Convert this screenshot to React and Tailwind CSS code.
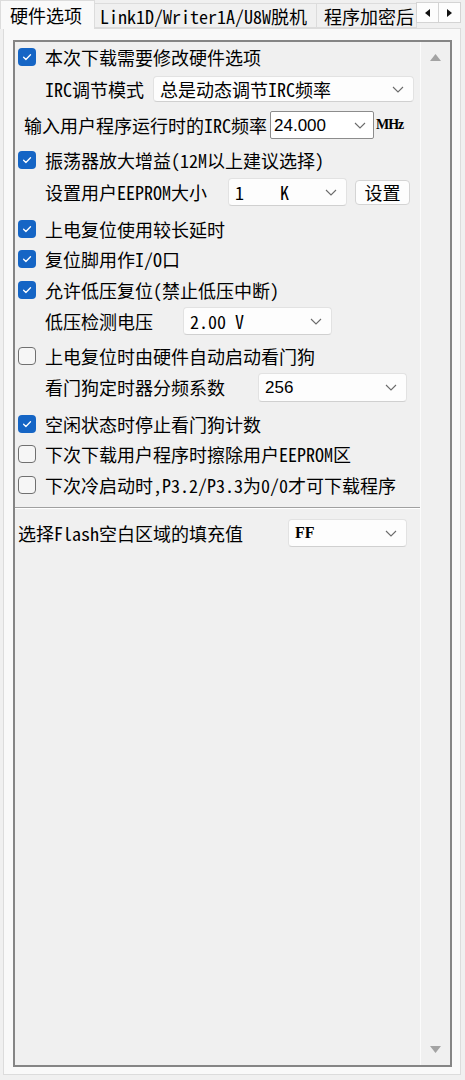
import React from "react";

const font = "font-['Noto_Sans_Mono_CJK_SC','Liberation_Mono','Noto_Sans_CJK_SC',monospace]";

function Chevron() {
  return (
    <svg width="12" height="7" viewBox="0 0 12 7" className="shrink-0">
      <path d="M1 1l5 5 5-5" fill="none" stroke="#6b6b6b" strokeWidth="1.1" />
    </svg>
  );
}

function Check({ on }) {
  if (on) {
    return (
      <span className="w-[18px] h-[18px] rounded-[4px] bg-[#1565c5] flex items-center justify-center shrink-0">
        <svg width="12" height="12" viewBox="0 0 12 12">
          <path d="M2.6 6.3l2.3 2.2 4.6-4.7" fill="none" stroke="white" strokeWidth="1.3" strokeLinecap="round" strokeLinejoin="round" />
        </svg>
      </span>
    );
  }
  return <span className="w-[18px] h-[18px] rounded-[4px] border border-[#707070] bg-[#f6f6f6] shrink-0" />;
}

function CheckRow({ on, label, cls }) {
  return (
    <div className={`flex items-center pl-[3px] ${cls}`}>
      <Check on={on} />
      <span className="ml-[9px] whitespace-nowrap">{label}</span>
    </div>
  );
}

function Select({ value, cls, textCls = "" }) {
  return (
    <div className={`flex items-center justify-between bg-[#fdfdfd] border border-[#e2e2e2] border-b-[#d0d0d0] rounded-[4px] pl-[6px] pr-[9px] ${cls}`}>
      <span className={`whitespace-pre ${textCls}`}>{value}</span>
      <Chevron />
    </div>
  );
}

export default function App() {
  return (
    <div className={`w-[465px] h-[1080px] bg-[#f0f0f0] text-black text-[18px] leading-none ${font} overflow-hidden`}>
      {/* tabs */}
      <div className="relative h-[28px] flex items-end">
        <div className="relative z-10 w-[95px] h-[29px] -mb-[1px] bg-[#f9f9f9] border border-b-0 border-[#dcdcdc] flex items-center pl-[9px]">
          硬件选项
        </div>
        <div className="w-[222px] h-[25px] bg-[#f0f0f0] border border-l-0 border-[#dcdcdc] flex items-center pl-[5px] whitespace-nowrap">
          Link1D/Writer1A/U8W脱机
        </div>
        <div className="w-[100px] h-[25px] bg-[#f0f0f0] border border-l-0 border-[#dcdcdc] flex items-center pl-[7px] whitespace-nowrap">
          程序加密后
        </div>
        <div className="absolute right-[4px] top-[2px] flex">
          <div className="w-[23px] h-[21px] bg-[#fdfdfd] border border-[#d4d4d4] flex items-center justify-center">
            <svg width="5" height="8" viewBox="0 0 5 8"><path d="M5 0L0 4l5 4z" fill="#111" /></svg>
          </div>
          <div className="w-[22px] h-[21px] bg-[#fdfdfd] border border-l-0 border-[#d4d4d4] flex items-center justify-center">
            <svg width="5" height="8" viewBox="0 0 5 8"><path d="M0 0l5 4-5 4z" fill="#111" /></svg>
          </div>
        </div>
      </div>

      {/* tab pane */}
      <div className="ml-[3px] mr-[4px] h-[1047px] bg-[#f9f9f9] border border-[#dcdcdc] pl-[9px] pr-[8px] pt-[11px] pb-[7px]">
        <div className="h-full border-2 border-[#858585] bg-[#f0f0f0] flex">
          {/* content */}
          <div className="w-[405px] flex flex-col">
            <CheckRow on label="本次下载需要修改硬件选项" cls="h-[30px]" />

            <div className="flex items-center h-[34px] pl-[30px]">
              <span className="w-[108px] whitespace-nowrap">IRC调节模式</span>
              <Select value="总是动态调节IRC频率" cls="w-[261px] h-[26px]" />
            </div>

            <div className="flex items-center h-[38px] pl-[9px]">
              <span className="w-[246px] whitespace-nowrap">输入用户程序运行时的IRC频率</span>
              <div className="w-[104px] h-[28px] bg-white border border-[#8c8c8c] rounded-[2px] flex items-center justify-between pl-[3px] pr-[7px]">
                <span className="font-['Liberation_Sans',sans-serif] text-[17px]">24.000</span>
                <Chevron />
              </div>
              <span className="ml-[2px] text-[14px] font-bold font-['Liberation_Serif',serif] tracking-[-1px]">MHz</span>
            </div>

            <CheckRow on label="振荡器放大增益(12M以上建议选择)" cls="h-[32px]" />

            <div className="flex items-center h-[32px] pl-[30px]">
              <span className="w-[183px] whitespace-nowrap">设置用户EEPROM大小</span>
              <Select value={"1    K"} cls="w-[119px] h-[28px]" />
              <div className="ml-[8px] w-[55px] h-[25px] bg-[#fdfdfd] border border-[#d4d4d4] rounded-[4px] flex items-center justify-center">
                设置
              </div>
            </div>

            <CheckRow on label="上电复位使用较长延时" cls="h-[30px] mt-[6px]" />
            <CheckRow on label="复位脚用作I/O口" cls="h-[30px]" />
            <CheckRow on label="允许低压复位(禁止低压中断)" cls="h-[32px]" />

            <div className="flex items-center h-[30px] pl-[30px]">
              <span className="w-[138px] whitespace-nowrap">低压检测电压</span>
              <Select value="2.00 V" cls="w-[149px] h-[28px]" />
            </div>

            <CheckRow on={false} label="上电复位时由硬件自动启动看门狗" cls="h-[32px] mt-[4px]" />

            <div className="flex items-center h-[30px] pl-[30px]">
              <span className="w-[213px] whitespace-nowrap">看门狗定时器分频系数</span>
              <Select value="256" cls="w-[149px] h-[29px]" textCls="font-['Liberation_Sans',sans-serif] text-[17px]" />
            </div>

            <CheckRow on label="空闲状态时停止看门狗计数" cls="h-[32px] mt-[6px]" />
            <CheckRow on={false} label="下次下载用户程序时擦除用户EEPROM区" cls="h-[28px]" />
            <CheckRow on={false} label="下次冷启动时,P3.2/P3.3为0/0才可下载程序" cls="h-[30px] mt-[2px]" />

            <div className="mt-[7px] h-[2px] border-t border-[#a0a0a0] border-b border-b-white" />

            <div className="flex items-center h-[34px] mt-[7px] pl-[3px]">
              <span className="w-[270px] whitespace-nowrap">选择Flash空白区域的填充值</span>
              <Select value="FF" cls="w-[119px] h-[28px]" textCls="font-bold font-['Liberation_Serif',serif] text-[16px]" />
            </div>
          </div>

          {/* scrollbar */}
          <div className="flex-1 border-l border-[#fbfbfb] flex flex-col items-center justify-between pt-[12px] pb-[12px]">
            <svg width="11" height="7" viewBox="0 0 11 7"><path d="M5.5 0L11 7H0z" fill="#a3a3a3" /></svg>
            <svg width="11" height="7" viewBox="0 0 11 7"><path d="M0 0h11L5.5 7z" fill="#a3a3a3" /></svg>
          </div>
        </div>
      </div>
    </div>
  );
}
